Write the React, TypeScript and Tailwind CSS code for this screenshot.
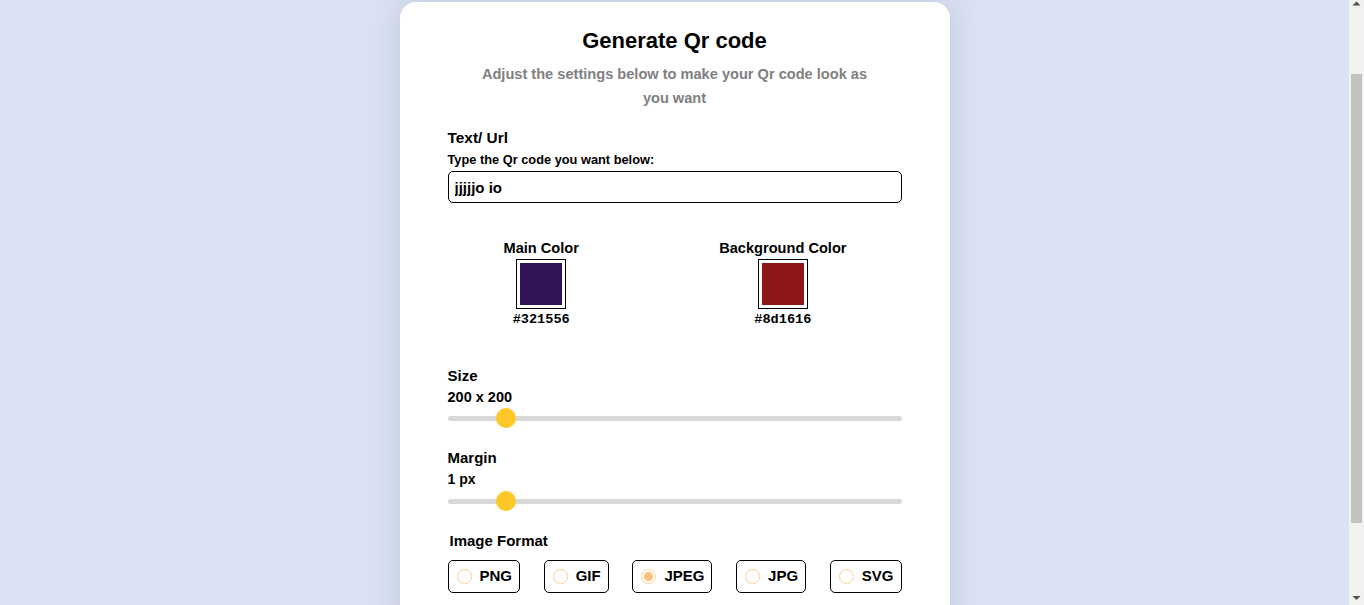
import { useState } from "react";

const FORMATS = ["PNG", "GIF", "JPEG", "JPG", "SVG"];

function Slider({ offset }: { offset: number }) {
  return (
    <div className="relative h-[20px] w-full">
      <div className="absolute left-0 right-0 top-[8px] h-[5px] rounded-full bg-[#d9d9d9]" />
      <div
        className="absolute top-0 h-[20px] w-[20px] rounded-full bg-[#fdc828]"
        style={{ left: offset }}
      />
    </div>
  );
}

function Swatch({ label, color }: { label: string; color: string }) {
  return (
    <div className="flex flex-col items-center">
      <div className="text-[14.6px] font-bold leading-[20px]">{label}</div>
      <div className="mt-[1px] h-[50px] w-[50px] border border-black bg-white p-[3px]">
        <div className="h-full w-full" style={{ backgroundColor: color }} />
      </div>
      <div className="mt-[3px] font-['Liberation_Mono',monospace] text-[13.6px] font-bold leading-[16px]">
        {color}
      </div>
    </div>
  );
}

// browser scrollbar as it shows in the page
function Scrollbar() {
  return (
    <div className="fixed right-0 top-0 flex h-screen w-[15px] flex-col items-center bg-[#f1f1f1]">
      <svg width="9" height="6" viewBox="0 0 9 6" className="mt-[1px]">
        <path d="M0.5 4.5 L4.5 0.5 L8.5 4.5 Z" fill="#505050" />
      </svg>
      <div className="mt-[67px] h-[449px] w-[11px] bg-[#c1c1c1]" />
      <div className="flex-1" />
      <svg width="9" height="6" viewBox="0 0 9 6" className="mb-[4px]">
        <path d="M0.5 1 L8.5 1 L4.5 5 Z" fill="#505050" />
      </svg>
    </div>
  );
}

export default function App() {
  const [text, setText] = useState("jjjjjo io");
  const [format, setFormat] = useState("JPEG");

  return (
    <div className="flex min-h-screen justify-center bg-[#dae2f3] pb-[16px] pr-[15px] pt-[2px] font-['Liberation_Sans',Arial,sans-serif] text-black">
      <div className="w-[550px] rounded-[16px] bg-white px-[48px] pb-[48px] pt-[23px] shadow-[0_0_32px_rgba(60,70,110,0.18)]">
        <h1 className="text-center text-[22px] font-bold leading-[32px]">Generate Qr code</h1>
        <p className="mx-auto mt-[5px] max-w-[395px] text-center text-[14.6px] font-bold leading-[24px] text-[#808080]">
          Adjust the settings below to make your Qr code look as you want
        </p>

        <div className="mt-[18px] text-[15.4px] font-bold leading-[20px]">Text/ Url</div>
        <div className="mt-[4px] text-[12.8px] font-bold leading-[16px]">Type the Qr code you want below:</div>
        <input
          value={text}
          onChange={(e) => setText(e.target.value)}
          className="mt-[3px] h-[32px] w-full rounded-[5px] border border-black px-[6px] text-[15px] font-bold outline-none"
        />

        <div className="mt-[35px] flex justify-between pl-[56px] pr-[55px]">
          <Swatch label="Main Color" color="#321556" />
          <Swatch label="Background Color" color="#8d1616" />
        </div>

        <div className="mt-[38px] text-[15px] font-bold leading-[20px]">Size</div>
        <div className="mt-[3px] text-[14.5px] font-bold leading-[16px]">200 x 200</div>
        <div className="mt-[3px]">
          <Slider offset={48} />
        </div>

        <div className="mt-[20px] text-[15px] font-bold leading-[20px]">Margin</div>
        <div className="mt-[3px] text-[14px] font-bold leading-[16px]">1 px</div>
        <div className="mt-[4px]">
          <Slider offset={48} />
        </div>

        <div className="mt-[20px] pl-[2px] text-[15px] font-bold leading-[20px]">Image Format</div>
        <div className="mt-[9px] flex justify-between">
          {FORMATS.map((f) => (
            <button
              key={f}
              onClick={() => setFormat(f)}
              className="flex h-[33px] items-center gap-[8px] rounded-[5px] border border-black pl-[8px] pr-[7px] text-[15px] font-bold"
            >
              <span className="flex h-[15px] w-[15px] items-center justify-center rounded-full border border-[#fdcf94]">
                {format === f && <span className="h-[9px] w-[9px] rounded-full bg-[#fcbf78]" />}
              </span>
              {f}
            </button>
          ))}
        </div>
      </div>
      <Scrollbar />
    </div>
  );
}
